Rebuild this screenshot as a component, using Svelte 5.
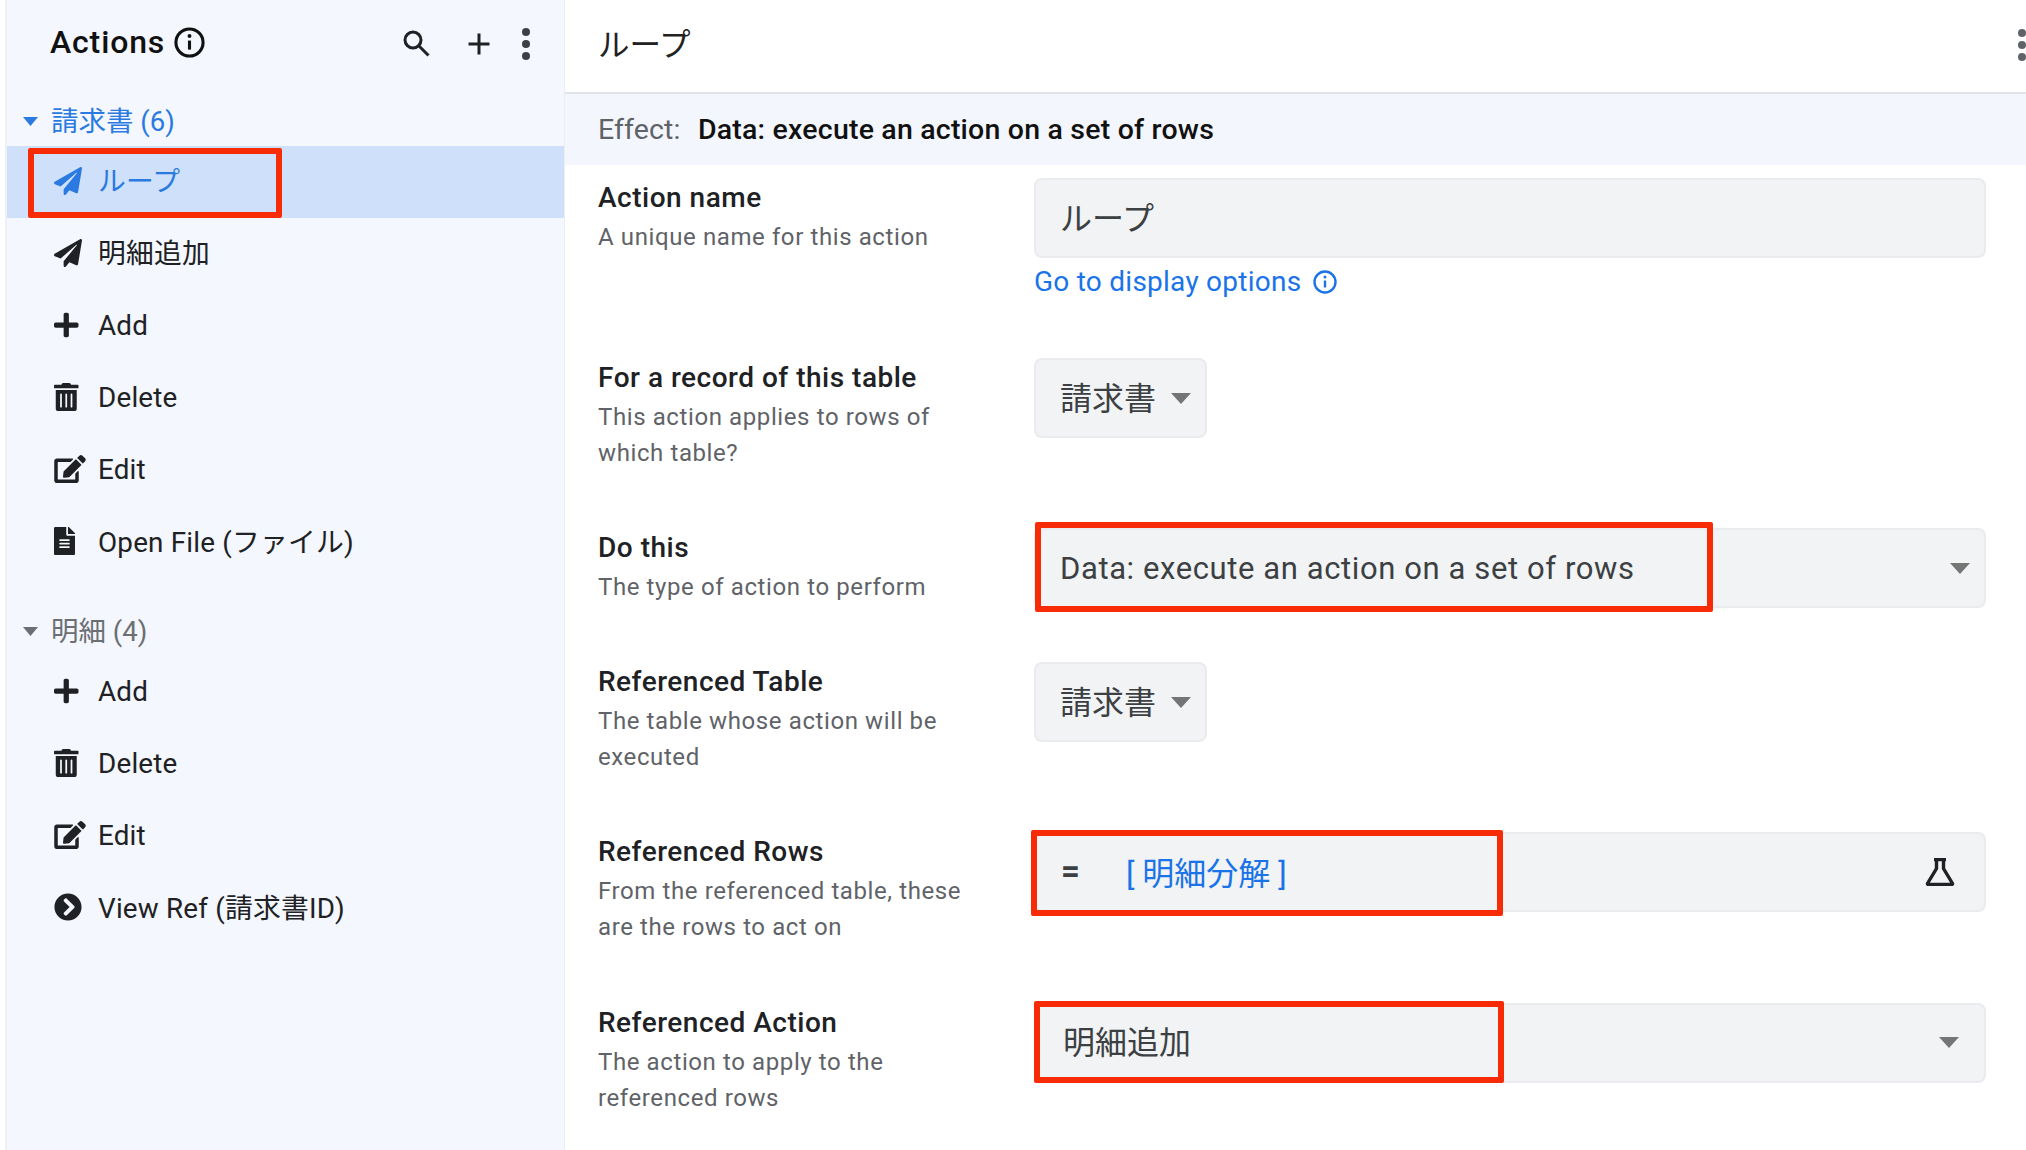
<script>
  const ICONS = {
    plane: { w: 28, h: 28, vb: '0 0 512 512', d: 'M476 3.2L12.5 270.6c-18.1 10.4-15.8 35.6 2.2 43.2L121 358.4l287.3-253.2c5.5-4.9 13.3 2.6 8.6 8.3L176 407v80.5c0 23.6 28.5 32.9 42.5 15.8L282 426l124.6 52.2c14.2 6 30.4-2.9 33-18.2l72-432C515 7.8 493.3-6.8 476 3.2z' },
    plus: { w: 24.5, h: 28, vb: '0 0 448 512', d: 'M416 208H272V64c0-17.67-14.33-32-32-32h-32c-17.67 0-32 14.33-32 32v144H32c-17.67 0-32 14.33-32 32v32c0 17.67 14.33 32 32 32h144v144c0 17.67 14.33 32 32 32h32c17.67 0 32-14.33 32-32V304h144c17.67 0 32-14.33 32-32v-32c0-17.67-14.33-32-32-32z' },
    trash: { w: 24.5, h: 28, vb: '0 0 448 512', d: 'M32 464a48 48 0 0 0 48 48h288a48 48 0 0 0 48-48V128H32zm272-256a16 16 0 0 1 32 0v224a16 16 0 0 1-32 0zm-96 0a16 16 0 0 1 32 0v224a16 16 0 0 1-32 0zm-96 0a16 16 0 0 1 32 0v224a16 16 0 0 1-32 0zM432 32H312l-9.4-18.7A24 24 0 0 0 281.1 0H166.8a23.72 23.72 0 0 0-21.4 13.3L136 32H16A16 16 0 0 0 0 48v32a16 16 0 0 0 16 16h416a16 16 0 0 0 16-16V48a16 16 0 0 0-16-16z' },
    edit: { w: 32, h: 28, vb: '0 0 576 512', d: 'M402.6 83.2l90.2 90.2c3.8 3.8 3.8 10 0 13.8L274.4 405.6l-92.8 10.3c-12.4 1.4-22.9-9.1-21.5-21.5l10.3-92.8L388.8 83.2c3.8-3.8 10-3.8 13.8 0zm162-22.9l-48.8-48.8c-15.2-15.2-39.9-15.2-55.2 0l-35.4 35.4c-3.8 3.8-3.8 10 0 13.8l90.2 90.2c3.8 3.8 10 3.8 13.8 0l35.4-35.4c15.2-15.3 15.2-40 0-55.2zM384 346.2V448H64V128h229.8c3.2 0 6.2-1.3 8.5-3.5l40-40c7.6-7.6 2.2-20.5-8.5-20.5H48C21.5 64 0 85.5 0 112v352c0 26.5 21.5 48 48 48h352c26.5 0 48-21.5 48-48V306.2c0-10.7-12.9-16-20.5-8.5l-40 40c-2.2 2.3-3.5 5.3-3.5 8.5z' },
    file: { w: 21, h: 28, vb: '0 0 384 512', d: 'M224 136V0H24C10.7 0 0 10.7 0 24v464c0 13.3 10.7 24 24 24h336c13.3 0 24-10.7 24-24V160H248c-13.2 0-24-10.8-24-24zm64 236c0 6.6-5.4 12-12 12H108c-6.6 0-12-5.4-12-12v-8c0-6.6 5.4-12 12-12h168c6.6 0 12 5.4 12 12v8zm0-64c0 6.6-5.4 12-12 12H108c-6.6 0-12-5.4-12-12v-8c0-6.6 5.4-12 12-12h168c6.6 0 12 5.4 12 12v8zm0-72v8c0 6.6-5.4 12-12 12H108c-6.6 0-12-5.4-12-12v-8c0-6.6 5.4-12 12-12h168c6.6 0 12 5.4 12 12zm96-114.1v6.1H256V0h6.1c6.4 0 12.5 2.5 17 7l97.9 98c4.5 4.5 7 10.6 7 16.9z' },
    chevron: { w: 28, h: 28, vb: '0 0 512 512', d: 'M256 8c137 0 248 111 248 248S393 504 256 504 8 393 8 256 119 8 256 8zm113.9 231L234.4 103.5c-9.4-9.4-24.6-9.4-33.9 0l-17 17c-9.4 9.4-9.4 24.6 0 33.9L285.1 256 183.5 357.6c-9.4 9.4-9.4 24.6 0 33.9l17 17c9.4 9.4 24.6 9.4 33.9 0L369.9 273c9.4-9.4 9.4-24.6 0-34z' }
  };
  const groups = [
    { name: '請求書 (6)', active: true, items: [
      { icon: 'plane', label: 'ループ', selected: true, kind: 'cjk' },
      { icon: 'plane', label: '明細追加', kind: 'cjk' },
      { icon: 'plus', label: 'Add', kind: 'lat' },
      { icon: 'trash', label: 'Delete', kind: 'lat' },
      { icon: 'edit', label: 'Edit', kind: 'lat' },
      { icon: 'file', label: 'Open File (ファイル)', kind: 'mix' }
    ] },
    { name: '明細 (4)', active: false, items: [
      { icon: 'plus', label: 'Add', kind: 'lat' },
      { icon: 'trash', label: 'Delete', kind: 'lat' },
      { icon: 'edit', label: 'Edit', kind: 'lat' },
      { icon: 'chevron', label: 'View Ref (請求書ID)', kind: 'mix' }
    ] }
  ];
</script>

{#snippet info(size)}
  <svg class="info" width={size} height={size} viewBox="0 0 24 24" fill="none" stroke="currentColor" stroke-width="2.4">
    <circle cx="12" cy="12" r="10.5" />
    <path d="M12 10.500v7" />
    <circle cx="12" cy="7" r="1.5" fill="currentColor" stroke="none" />
  </svg>
{/snippet}

{#snippet arrow()}
  <svg class="arrow" width="20" height="11" viewBox="0 0 20 11"><path d="M0 0h20L10 11z" fill="#757575" /></svg>
{/snippet}

<div class="page">
  <aside class="sidebar">
    <header class="side-head">
      <h1>Actions</h1>
      {@render info(31)}
      <div class="tools">
        <svg class="t-search" width="30" height="30" viewBox="0 0 30 30" fill="none" stroke="#202124" stroke-width="3">
          <circle cx="12" cy="12" r="8" />
          <path d="M18 18l9.500 9.500" />
        </svg>
        <svg class="t-plus" width="24" height="24" viewBox="0 0 24 24" fill="none" stroke="#202124" stroke-width="3"><path d="M12 1.500v21M1.500 12h21" /></svg>
        <svg class="t-dots" width="12" height="34" viewBox="0 0 12 34" fill="#3c4043"><circle cx="6" cy="5" r="4" /><circle cx="6" cy="17" r="4" /><circle cx="6" cy="29" r="4" /></svg>
      </div>
    </header>

    {#each groups as g, gi}
      <section class:second={gi > 0}>
        <div class="group" class:active={g.active}>
          <svg class="caret" width="15" height="9" viewBox="0 0 15 9"><path d="M0 0h15L7.500 9z" fill="currentColor" /></svg>
          <span class="g-name">{g.name}</span>
        </div>
        {#each g.items as it}
          <div class="row" class:selected={it.selected}>
            <span class="ic">
              <svg width={ICONS[it.icon].w} height={ICONS[it.icon].h} viewBox={ICONS[it.icon].vb} fill="currentColor"><path d={ICONS[it.icon].d} /></svg>
            </span>
            <span class="lbl {it.kind}">{it.label}</span>
            {#if it.selected}<span class="red side-red"></span>{/if}
          </div>
        {/each}
      </section>
    {/each}
  </aside>

  <main>
    <header class="main-head">
      <h2>ループ</h2>
      <svg class="main-dots" width="10" height="34" viewBox="0 0 10 34" fill="#5f6368"><circle cx="5" cy="5" r="4" /><circle cx="5" cy="17" r="4" /><circle cx="5" cy="29" r="4" /></svg>
    </header>
    <div class="effect"><span class="e-k">Effect:</span><span class="e-v">Data: execute an action on a set of rows</span></div>

    <div class="form">
      <div class="field">
        <div class="text"><h3>Action name</h3><p>A unique name for this action</p></div>
        <div>
          <div class="ctl"><span class="v cjk">ループ</span></div>
          <div class="link">Go to display options {@render info(24)}</div>
        </div>
      </div>

      <div class="field">
        <div class="text"><h3>For a record of this table</h3><p>This action applies to rows of<br />which table?</p></div>
        <div class="ctl short"><span class="v cjk">請求書</span>{@render arrow()}</div>
      </div>

      <div class="field">
        <div class="text"><h3>Do this</h3><p>The type of action to perform</p></div>
        <div class="ctl"><span class="v lat">Data: execute an action on a set of rows</span>{@render arrow()}<span class="red do-red"></span></div>
      </div>

      <div class="field">
        <div class="text"><h3>Referenced Table</h3><p>The table whose action will be<br />executed</p></div>
        <div class="ctl short"><span class="v cjk">請求書</span>{@render arrow()}</div>
      </div>

      <div class="field">
        <div class="text"><h3>Referenced Rows</h3><p>From the referenced table, these<br />are the rows to act on</p></div>
        <div class="ctl">
          <span class="eq">=</span><span class="v blue">[ 明細分解 ]</span>
          <svg class="flask" width="30" height="28" viewBox="0 0 30 28" fill="none" stroke="#202124" stroke-width="3.400"><path d="M9 1.500h12M11.500 1.500v9L2.500 25.500a.7.7 0 0 0 .6 1h23.800a.7.7 0 0 0 .6-1L18.500 10.500V1.500" /></svg>
          <span class="red rows-red"></span>
        </div>
      </div>

      <div class="field act">
        <div class="text"><h3>Referenced Action</h3><p>The action to apply to the<br />referenced rows</p></div>
        <div class="ctl"><span class="v cjk nudge">明細追加</span>{@render arrow()}<span class="red act-red"></span></div>
      </div>
    </div>
  </main>
</div>

<style>
  :global(body) { margin: 0; background: #fff; }
  .page {
    width: 2026px; height: 1150px; display: flex; overflow: hidden;
    font-family: Roboto, "Noto Sans CJK JP", sans-serif; color: #202124; background: #fff;
  }
  h1, h2, h3, p { margin: 0; font-weight: 400; }

  .sidebar {
    width: 560px; margin-left: 5px; box-sizing: border-box; flex: none;
    background: #f4f7fd; border-left: 2px solid #eef0f2; border-right: 1px solid #eceef1;
  }
  .side-head { height: 96px; display: flex; align-items: flex-start; padding: 22px 0 0 43px; box-sizing: border-box; }
  h1 { font-size: 32px; line-height: 40px; font-weight: 500; letter-spacing: .85px; color: #111; }
  .side-head .info { margin: 5px 0 0 9px; color: #111; }
  .tools { margin-left: auto; width: 169px; height: 60px; display: flex; align-items: flex-start; }
  .t-search { margin: 6px 0 0 6px; }
  .t-plus { margin: 10px 0 0 36px; }
  .t-dots { margin: 5px 0 0 29px; }

  section.second { margin-top: 28px; }
  .group { height: 50px; display: flex; align-items: center; padding-left: 16px; color: #6b6f74; font-size: 27.5px; }
  .group.active { color: #2a7ae2; }
  .g-name { padding-bottom: 5px; }
  .caret { margin-right: 13px; }
  .row { position: relative; height: 72px; display: flex; align-items: center; padding-left: 47px; font-size: 27.8px; letter-spacing: .2px; color: #202124; }
  .row.selected { background: #cfe0fa; color: #2a7ae2; }
  .ic { width: 44px; display: flex; align-items: center; flex: none; padding-bottom: 2px; }
  .lbl.lat { padding-bottom: 2px; }
  .lbl.mix { padding-bottom: 5px; }
  .lbl.cjk { padding-bottom: 7px; }

  .red { position: absolute; box-sizing: border-box; border: 6px solid #f72c07; border-radius: 2px; pointer-events: none; }
  .side-red { left: 21px; top: 2px; width: 254px; height: 70px; }

  main { flex: 1; min-width: 0; }
  .main-head { height: 94px; box-sizing: border-box; border-bottom: 2px solid #e0e3e7; display: flex; align-items: center; padding-left: 33px; position: relative; }
  h2 { font-size: 31.5px; color: #222; font-weight: 400; margin-top: -8px; }
  .main-dots { position: absolute; left: 1452px; top: 28px; }
  .effect { height: 71px; background: #f3f6fc; display: flex; align-items: center; padding-left: 33px; font-size: 28.5px; }
  .e-k { color: #5f6368; width: 100px; flex: none; letter-spacing: .1px; }
  .e-v { color: #111; font-weight: 500; letter-spacing: .2px; }

  .form { padding: 13px 40px 0 33px; display: grid; grid-template-rows: 180px 170px 134px 170px 171px; }
  .field { display: grid; grid-template-columns: 436px 1fr; align-items: start; }
  .text { padding-top: 1px; }
  h3 { font-size: 28px; line-height: 38px; font-weight: 500; letter-spacing: .5px; color: #202124; }
  .text p { margin-top: 2px; font-size: 24px; line-height: 36px; letter-spacing: .6px; color: #5f6368; }

  .ctl {
    position: relative; height: 80px; box-sizing: border-box; display: flex; align-items: center; padding: 0 25px;
    background: #f1f3f4; border: 2px solid #e9ebee; border-radius: 8px; font-size: 32px; color: #3c4043;
  }
  .ctl.short { width: 173px; }
  .v { white-space: nowrap; }
  .v.cjk { padding-bottom: 5px; margin-left: -1px; }
  .v.nudge { margin-left: 2px; padding-bottom: 7px; }
  .v.lat { letter-spacing: .6px; font-size: 31px; margin-left: -1px; }
  .v.blue { color: #1a73e8; margin-left: 46px; padding-bottom: 2px; }
  .eq { font-weight: 700; font-size: 33px; padding-bottom: 3px; }
  .arrow { position: absolute; right: 14px; top: 33px; }
  .act .arrow { right: 25px; top: 32px; }
  .flask { position: absolute; right: 29px; top: 24px; }
  .do-red { left: -1px; top: -8px; width: 678px; height: 90px; }
  .rows-red { left: -5px; top: -4px; width: 472px; height: 86px; }
  .act-red { left: -2px; top: -4px; width: 470px; height: 82px; }

  .link { margin-top: 6px; font-size: 28px; line-height: 36px; letter-spacing: .25px; color: #1a73e8; display: flex; align-items: center; gap: 12px; }
</style>
